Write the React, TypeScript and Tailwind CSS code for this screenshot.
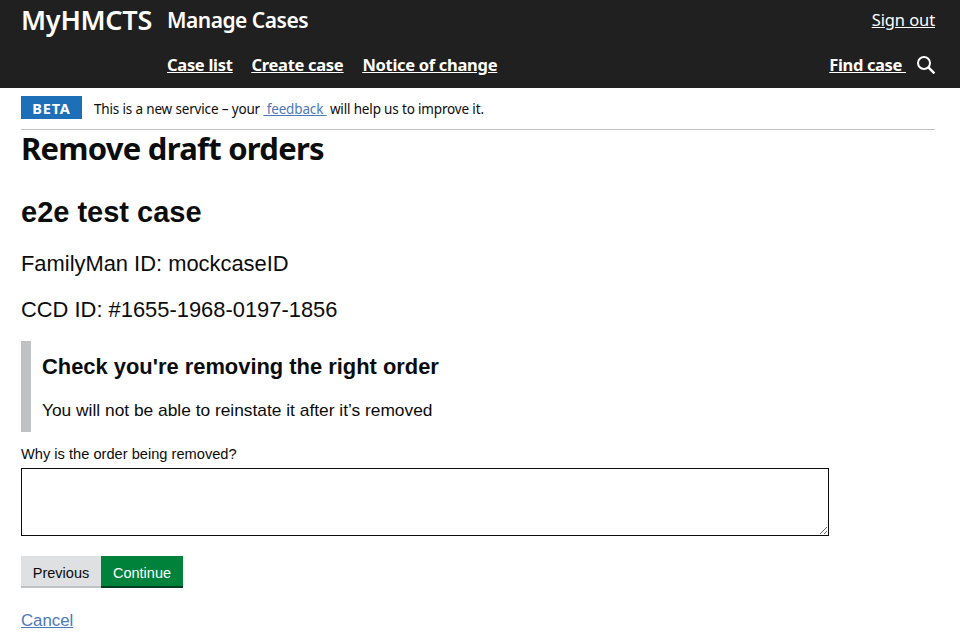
const gds = "font-['Noto_Sans',sans-serif]";
const arial = "font-['Liberation_Sans',Arial,sans-serif]";

function SearchIcon() {
  return (
    <svg width="18" height="18" viewBox="0 0 18 18" fill="none" stroke="white" strokeWidth="2">
      <circle cx="7" cy="7" r="6" />
      <path d="M11.4 11.4 L17.4 17.4" strokeWidth="2.4" />
    </svg>
  );
}

function Header() {
  return (
    <header className={`h-[88px] bg-[#202020] pl-[21px] pr-[25px] text-white ${gds}`}>
      <div className="flex h-[44px] items-start justify-between">
        <div className="flex items-start">
          <span className="w-[146px] text-[27px] leading-[40px] font-semibold tracking-[-0.25px]">MyHMCTS</span>
          <span className="text-[21px] leading-[40px] font-semibold tracking-[-0.5px]">Manage Cases</span>
        </div>
        <a className="mt-[8px] text-[16.5px] leading-[24px] tracking-[-0.1px] underline">Sign out</a>
      </div>
      <div className="flex items-center justify-between pl-[146px]">
        <nav className="flex gap-[19px] text-[16.5px] leading-[42px] font-bold tracking-[-0.3px] underline">
          <a>Case list</a>
          <a>Create case</a>
          <a>Notice of change</a>
        </nav>
        <div className="flex items-center gap-[11px]">
          <a className="text-[16.5px] leading-[42px] font-bold tracking-[-0.35px] underline">Find case&nbsp;</a>
          <SearchIcon />
        </div>
      </div>
    </header>
  );
}

function BetaBanner() {
  return (
    <div className={`flex h-[42px] items-center border-b border-[#bfc1c3] pb-[2px] ${gds}`}>
      <strong className="w-[61px] bg-[#1d70b8] pt-[1px] text-center text-[14.5px] leading-[22px] font-bold tracking-[0.8px] text-white">BETA</strong>
      <p className="mt-[2px] ml-[12px] text-[13.5px] leading-[20px] tracking-[-0.16px] text-[#0b0c0c]">
        This is a new service – your <a className="text-[#4c78b8] underline">&nbsp;feedback&nbsp;</a> will help us to improve it.
      </p>
    </div>
  );
}

export default function App() {
  return (
    <div className="min-h-[640px] bg-white">
      <Header />
      <main className="pl-[21px] pr-[25px]">
        <BetaBanner />
        <h1 className={`text-[31px] leading-[36px] font-bold tracking-[-0.75px] text-[#0b0c0c] ${gds}`}>Remove draft orders</h1>
        <div className={`text-[#0b0c0c] ${arial}`}>
          <h2 className="mt-[28px] text-[29px] leading-[36px] font-bold">e2e test case</h2>
          <p className="mt-[18px] text-[21.9px] leading-[32px]">FamilyMan ID: mockcaseID</p>
          <p className="mt-[14px] text-[21.9px] leading-[32px]">CCD ID: #1655-1968-0197-1856</p>
          <div className="mt-[15px] w-[800px] border-l-[10px] border-[#bfc1c3] pl-[11px]">
            <h3 className="pt-[11px] text-[21.9px] leading-[30px] font-bold">Check you're removing the right order</h3>
            <p className="mt-[15px] pb-[9px] text-[17.35px] leading-[26px]">You will not be able to reinstate it after it’s removed</p>
          </div>
          <label className="mt-[13px] block text-[14.65px] leading-[18px]">Why is the order being removed?</label>
          <textarea className="mt-[5px] block h-[68px] w-[808px] border border-[#0b0c0c] bg-white" />
          <div className="mt-[20px] flex">
            <button className="h-[32px] w-[80px] border-b-2 border-[#bfc1c3] bg-[#dee0e2] pt-[2px] text-[14.5px] leading-[30px]">Previous</button>
            <button className="h-[32px] w-[82px] border-b-2 border-[#00401e] bg-[#00823b] pt-[2px] text-[14.5px] leading-[30px] text-white">Continue</button>
          </div>
          <a className="mt-[22px] block text-[16.8px] leading-[22px] text-[#4c78b8] underline">Cancel</a>
        </div>
      </main>
    </div>
  );
}
